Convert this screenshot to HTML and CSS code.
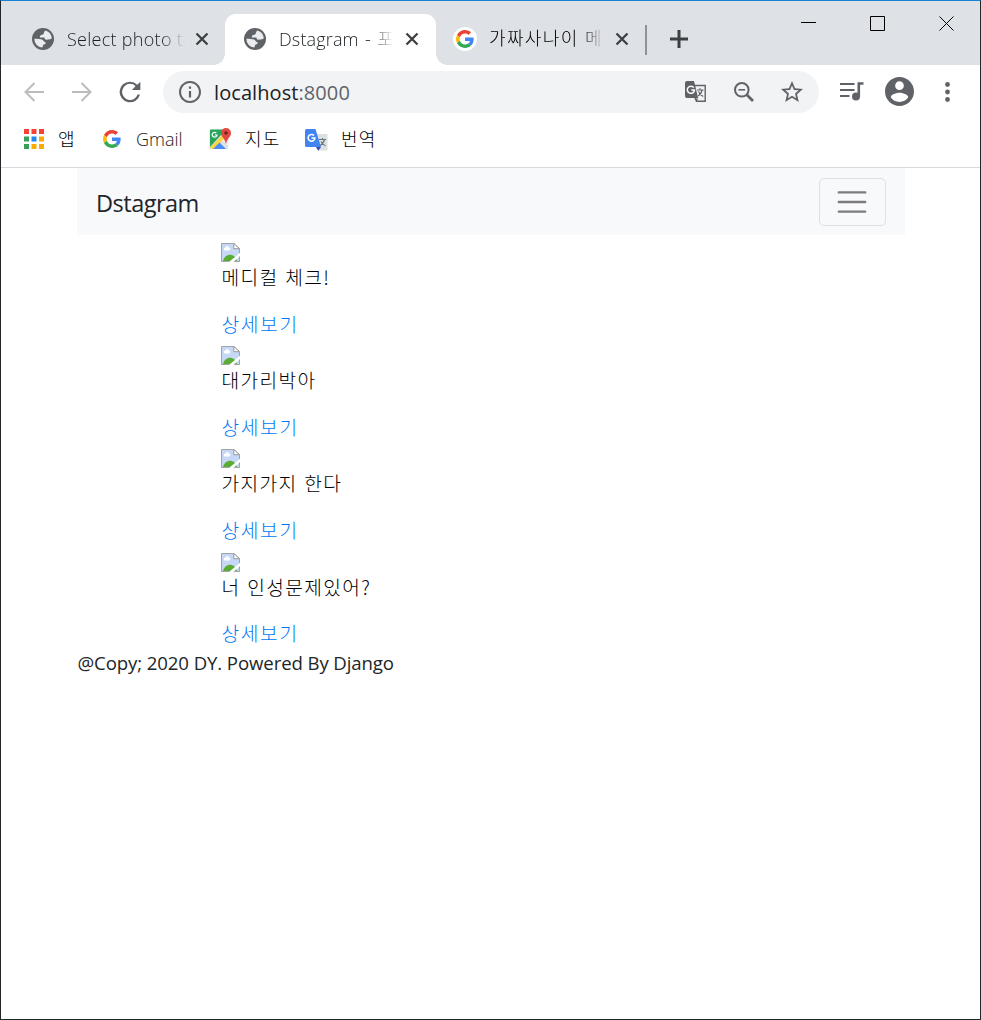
FILE: index.html
```html
<!DOCTYPE html>
<html lang="ko">
<head>
<meta charset="utf-8">
<title>Dstagram</title>
<link rel="stylesheet" href="styles.css">
</head>
<body>
<svg class="defs" width="0" height="0">
  <symbol id="globe" viewBox="0 0 22 22"><circle cx="11" cy="11" r="11" fill="#5f6368"/><path fill="#e9ebee" d="M13.500 2.600A8.800 8.800 0 0 1 19.700 10.500l-1.500.7c-1.700-.2-3.100.8-4.700.3-.9-.3-.6-1.500-1.300-2.100H7.700c.2-1.600 1-2.500 2.600-2.600 1-.1 1.300-.6 1.500-1.500.3-1.200.7-2.100 1.700-2.700z"/><path fill="#e9ebee" d="M2.300 10.800c3 0 6.200.1 8.200 1 1.100.5.800 2 2.300 2.200 1 .1 1.100 1 .5 1.700-.7.800-2 .7-2.400 1.700-.3.800 0 1.700-.8 2.200A8.800 8.800 0 0 1 2.300 10.800z"/></symbol>
  <symbol id="google" viewBox="0 0 48 48"><path fill="#EA4335" d="M24 9.500c3.540 0 6.710 1.220 9.210 3.600l6.850-6.850C35.900 2.380 30.470 0 24 0 14.620 0 6.510 5.380 2.560 13.220l7.980 6.190C12.430 13.720 17.740 9.500 24 9.500z"/><path fill="#4285F4" d="M46.980 24.550c0-1.570-.15-3.090-.38-4.550H24v9.020h12.940c-.58 2.960-2.260 5.480-4.780 7.180l7.730 6c4.510-4.180 7.090-10.360 7.090-17.650z"/><path fill="#FBBC05" d="M10.530 28.590c-.48-1.450-.76-2.990-.76-4.590s.27-3.140.76-4.590l-7.980-6.190C.92 16.460 0 20.120 0 24c0 3.880.92 7.540 2.560 10.780l7.970-6.190z"/><path fill="#34A853" d="M24 48c6.480 0 11.930-2.130 15.890-5.810l-7.730-6c-2.150 1.450-4.920 2.300-8.160 2.300-6.260 0-11.570-4.220-13.470-9.910l-7.980 6.190C6.510 42.620 14.620 48 24 48z"/></symbol>
  <symbol id="close" viewBox="0 0 14 14"><path d="M1.500 1.500l11 11m0-11l-11 11" stroke="#3c4043" stroke-width="2.300"/></symbol>
  <symbol id="broken" viewBox="0 0 19 19"><path d="M.5.5h12.300l5.700 5.200v12.800H.5z" fill="#c6d8f5" stroke="#a3a3a3"/><ellipse cx="6" cy="6" rx="3.300" ry="1.700" fill="#fff"/><circle cx="6.300" cy="4.800" r="1.700" fill="#fff"/><path d="M2 18c1-4 4-6.200 7-6.200 3.500 0 6 2.500 7 6.200z" fill="#59ad35"/><path d="M12.800.5v5.200h5.700z" fill="#fff" stroke="#999"/><path d="M8 19L19 9.800V13l-6.500 6z" fill="#fff"/></symbol>
</svg>
<div class="window">
  <header class="titlebar">
    <div class="tab tab-first"><svg class="favicon"><use href="#globe"/></svg><span class="tab-title t1">Select photo to</span><svg class="tab-close"><use href="#close"/></svg></div>
    <div class="tab tab-active"><svg class="favicon"><use href="#globe"/></svg><span class="tab-title t2">Dstagram - <span class="ko">포토</span></span><svg class="tab-close"><use href="#close"/></svg></div>
    <div class="tab tab-last"><span class="favicon favicon-disc"><svg width="18" height="18"><use href="#google"/></svg></span><span class="tab-title t3 ko">가짜사나이 메디</span><svg class="tab-close"><use href="#close"/></svg></div>
    <svg class="new-tab" width="18" height="18" viewBox="0 0 18 18"><path d="M9 0v18M0 9h18" stroke="#3c4043" stroke-width="3"/></svg>
    <div class="controls">
      <svg width="15" height="15" viewBox="0 0 15 15"><path d="M0 6.500h15" stroke="#000"/></svg>
      <svg width="15" height="15" viewBox="0 0 15 15"><path d="M.5.5h14v14H.5z" fill="none" stroke="#000"/></svg>
      <svg width="15" height="15" viewBox="0 0 15 15"><path d="M.5.5l14 14m0-14l-14 14" stroke="#000"/></svg>
    </div>
  </header>
  <div class="toolbar">
    <div class="nav-icons">
      <svg width="20" height="20" viewBox="0 0 20 20" fill="none" stroke="#babcbe" stroke-width="2"><path d="M20 10H1.500M10.500 1L1.500 10l9 9"/></svg>
      <svg width="20" height="20" viewBox="0 0 20 20" fill="none" stroke="#babcbe" stroke-width="2"><path d="M0 10h18.500M9.500 1l9 9-9 9"/></svg>
      <svg class="reload" width="22" height="22" viewBox="3.500 3.500 17 17"><path fill="#5f6368" d="M17.650 6.350A7.960 7.960 0 0 0 12 4a8 8 0 1 0 7.730 10h-1.800A6.200 6.200 0 1 1 12 5.700c1.660 0 3.140.69 4.220 1.780L13.500 10.500H20V4z"/></svg>
    </div>
    <div class="omnibox">
      <svg width="22" height="22" viewBox="2 2 20 20"><path fill="#5f6368" d="M11 7h2v2h-2zm0 4h2v6h-2zm1-9C6.480 2 2 6.480 2 12s4.480 10 10 10 10-4.480 10-10S17.520 2 12 2zm0 18.100c-4.460 0-8.100-3.640-8.100-8.100S7.540 3.900 12 3.900s8.100 3.640 8.100 8.100-3.640 8.100-8.100 8.100z"/></svg>
      <span class="url">localhost<span class="port">:8000</span></span>
      <span class="omni-actions">
        <svg width="22" height="22" viewBox="0 0 22 22"><path d="M9 4.500h11.200v15.800H11.500L10 17" fill="none" stroke="#5f6368" stroke-width="1.400"/><path d="M2 0h7l4.200 17H2a2 2 0 0 1-2-2V2a2 2 0 0 1 2-2z" fill="#5f6368"/><path d="M8.800 6.600A3.600 3.600 0 1 0 9.500 9H6.300" fill="none" stroke="#fff" stroke-width="1.500"/><path d="M12 9h6.500M15 7.300V9m2.200 0c-.6 2.700-2.200 4.800-4 6m.2-4.500c1 2 2.800 3.800 4.800 5" fill="none" stroke="#5f6368" stroke-width="1.200"/><path d="M10 17.500h3.300l-1.700 3z" fill="#5f6368"/></svg>
        <svg width="20" height="20" viewBox="0 0 20 20" fill="none" stroke="#5f6368"><circle cx="7.800" cy="7.800" r="6.800" stroke-width="2"/><path d="M4.500 7.800h6.600" stroke-width="1.600"/><path d="M12.800 12.800l6.200 6.200" stroke-width="2.700"/></svg>
        <svg width="22" height="22" viewBox="2 2 20 20"><path fill="#5f6368" d="M22 9.240l-7.190-.62L12 2 9.190 8.630 2 9.240l5.460 4.730L5.820 21 12 17.270 18.180 21l-1.630-7.030L22 9.240zM12 15.400l-3.760 2.270 1-4.280-3.320-2.880 4.380-.38L12 6.100l1.710 4.040 4.380.38-3.320 2.880 1 4.280L12 15.400z"/></svg>
      </span>
    </div>
    <div class="right-icons">
      <svg width="24" height="19" viewBox="0 0 24 19"><path d="M0 2h14.500M0 8h14.500M0 14h9.500" stroke="#5f6368" stroke-width="2.200"/><circle cx="16" cy="14.500" r="4" fill="#5f6368"/><path d="M18.800 15V1.500h4.700" fill="none" stroke="#5f6368" stroke-width="2.600"/></svg>
      <svg width="29" height="29" viewBox="2 2 20 20"><path fill="#5f6368" d="M12 2C6.480 2 2 6.480 2 12s4.480 10 10 10 10-4.480 10-10S17.520 2 12 2zm0 3c1.660 0 3 1.340 3 3s-1.340 3-3 3-3-1.340-3-3 1.340-3 3-3zm0 14.200c-2.500 0-4.710-1.280-6-3.220.03-1.990 4-3.080 6-3.080 1.990 0 5.970 1.090 6 3.080-1.290 1.940-3.500 3.220-6 3.220z"/></svg>
      <svg width="5" height="20" viewBox="0 0 5 20" fill="#5f6368"><circle cx="2.500" cy="2.500" r="2.400"/><circle cx="2.500" cy="10" r="2.400"/><circle cx="2.500" cy="17.500" r="2.400"/></svg>
    </div>
  </div>
  <nav class="bookmarks">
    <svg class="bm-icon" width="20" height="20" viewBox="0 0 20 20"><path fill="#f44336" d="M0 0h5v5H0zM7.500 0h5v5h-5zM15 0h5v5h-5z"/><path fill="#34a05a" d="M0 7.500h5v5H0zM0 15h5v5H0z"/><path fill="#1e88f5" d="M7.500 7.500h5v5h-5z"/><path fill="#fbab00" d="M15 7.500h5v5h-5zM7.500 15h5v5h-5zM15 15h5v5h-5z"/></svg>
    <span class="bm bm-apps ko">앱</span>
    <svg class="bm-icon" width="18" height="18"><use href="#google"/></svg>
    <span class="bm bm-gmail">Gmail</span>
    <svg class="bm-icon" width="22" height="22" viewBox="0 0 22 22"><path d="M1.500 1.500H19V21H.5V2.500z" fill="#dfe2e5"/><path d="M1.500 1.500H17L1 19V2z" fill="#2ba45b"/><path d="M15 6l5 5v8L12 11z" fill="#f1f1f1"/><path d="M1 19.500L13.500 7l2.500 2.500L4 21.500z" fill="#fdd43b"/><path d="M4 21l6.500-6.500L17 21z" fill="#4b8df8"/><path d="M7.300 5A2.400 2.400 0 1 0 8 7H5.800" fill="none" stroke="#fff" stroke-width="1.200"/><path d="M17 0a5 5 0 0 1 5 5c0 4.200-4 5.200-4.800 10.500h-.5C16 10.200 12 9.200 12 5a5 5 0 0 1 5-5z" fill="#e24a40"/><circle cx="17" cy="5" r="1.800" fill="#6f2521"/></svg>
    <span class="bm bm-maps ko">지도</span>
    <svg class="bm-icon bm-tr" width="23" height="22" viewBox="0 0 23 22"><path d="M8 5h14.500v16.500H13z" fill="#dedfe1"/><path d="M1.500 0h9l5.500 18H1.500A1.500 1.500 0 0 1 0 16.500v-15A1.500 1.500 0 0 1 1.500 0z" fill="#4384f3"/><path d="M11 18h5l-2.800 3.800z" fill="#314bad"/><path d="M9 6.500A3.400 3.400 0 1 0 9.900 9H6.500" fill="none" stroke="#fff" stroke-width="1.500"/><path d="M14 10.500h7M17.500 9v1.500m2 0c-.6 2.500-2.500 5-4.500 6m1-4c1 2 3 3.500 4.500 4.200" fill="none" stroke="#607983" stroke-width="1.100"/></svg>
    <span class="bm bm-translate ko">번역</span>
  </nav>
  <main class="container">
    <div class="navbar">
      <a class="brand">Dstagram</a>
      <button class="toggler" aria-label="menu"><svg width="36" height="36" viewBox="0 0 30 30"><path stroke="rgba(0,0,0,.5)" stroke-width="2" stroke-linecap="round" d="M4 7h22M4 15h22M4 23h22"/></svg></button>
    </div>
    <section class="photos">
      <article class="photo"><svg class="broken"><use href="#broken"/></svg><p class="caption">메디컬 체크!</p><a class="detail">상세보기</a></article>
      <article class="photo"><svg class="broken"><use href="#broken"/></svg><p class="caption">대가리박아</p><a class="detail">상세보기</a></article>
      <article class="photo"><svg class="broken"><use href="#broken"/></svg><p class="caption">가지가지 한다</p><a class="detail">상세보기</a></article>
      <article class="photo"><svg class="broken"><use href="#broken"/></svg><p class="caption">너 인성문제있어?</p><a class="detail">상세보기</a></article>
    </section>
    <footer><span class="foot">@Copy; 2020 DY. Powered By Django</span></footer>
  </main>
</div>
</body>
</html>
```
FILE: styles.css
```css
* { box-sizing: border-box; }
body { margin: 0; font-family: "Open Sans", "Noto Sans CJK KR", sans-serif; background: #fff; }
svg { display: block; flex: none; }
.defs { position: absolute; }
.ko, .caption, .detail { font-family: "Noto Sans CJK KR", sans-serif; font-weight: 300; }
.window { width: 981px; height: 1020px; border: 1px solid #23272c; border-top-color: #1a80d2; background: #fff; overflow: hidden; }

.titlebar { display: flex; height: 64px; padding-left: 14px; background: #dee1e6; }
.tab { display: flex; align-items: center; width: 210px; height: 51px; margin-top: 13px; padding: 0 0 1px 17px; position: relative; }
.tab-active { width: 211px; padding-left: 19px; background: #fff; border-radius: 11px 11px 0 0; }
.tab-active::before, .tab-active::after { content: ""; position: absolute; bottom: 0; width: 11px; height: 11px; }
.tab-active::before { left: -11px; background: radial-gradient(circle at 0 0, #dee1e6 10.500px, #fff 11px); }
.tab-active::after { right: -11px; background: radial-gradient(circle at 100% 0, #dee1e6 10.500px, #fff 11px); }
.tab-last { width: 211px; padding-left: 18px; }
.tab-last::after { content: ""; position: absolute; right: 0; top: 11px; width: 2px; height: 30px; background: #8f9296; }
.favicon { width: 22px; height: 22px; flex: none; }
.favicon-disc { display: flex; align-items: center; justify-content: center; width: 24px; height: 24px; margin: 0 -1px; border-radius: 50%; background: #fff; }
.tab-title { width: 115px; margin: 0 11px 0 13px; padding-bottom: 1px; overflow: hidden; white-space: nowrap; font-size: 18px; font-weight: 300; line-height: 30px; color: #1c2023; -webkit-mask-image: linear-gradient(90deg, #000 80%, transparent); mask-image: linear-gradient(90deg, #000 80%, transparent); }
.t1 { width: 118px; margin-right: 10px; letter-spacing: .28px; }
.t2 { letter-spacing: .15px; word-spacing: 1.500px; }
.t3 { letter-spacing: 1.350px; padding-bottom: 4px; color: #000; }
.tab-close { width: 14px; height: 14px; }
.new-tab { margin: 29px 0 0 23px; }
.controls { display: flex; gap: 54px; margin: 15px 0 0 113px; }

.toolbar { display: flex; align-items: center; height: 53px; margin-bottom: 1px; }
.nav-icons { display: flex; align-items: center; gap: 28px; width: 162px; padding-left: 23px; }
.reload { margin-left: -1px; }
.omnibox { display: flex; align-items: center; width: 656px; height: 42px; padding: 0 16px 0 16px; border-radius: 21px; background: #f1f3f4; }
.url { margin-left: 13px; padding-top: 2px; font-size: 20px; line-height: 30px; letter-spacing: .08px; color: #202124; }
.port { color: #5f6368; }
.omni-actions { display: flex; align-items: center; gap: 27px; margin-left: auto; }
.right-icons { display: flex; align-items: center; gap: 21px; margin-left: 21px; }
.right-icons svg:last-child { margin-left: 10px; }

.bookmarks { display: flex; align-items: center; height: 49px; padding: 0 0 8px 23px; border-bottom: 1px solid #d7dadd; font-size: 18px; line-height: 28px; color: #1c2023; }
.bm { white-space: nowrap; font-weight: 300; }
.bm.ko { letter-spacing: 1.200px; padding-bottom: 3px; color: #000; }
.bm-apps { width: 17px; margin: 0 28px 0 14px; }
.bm-gmail { width: 47px; margin: 0 26px 0 15px; }
.bm-maps { width: 35px; margin: 0 25px 0 14px; }
.bm-translate { margin-left: 13px; }
.bm-tr { margin-top: 1px; }

.container { width: 828px; margin-left: 76px; font-size: 19.200px; line-height: 28.800px; color: #212529; }
.navbar { display: flex; align-items: center; justify-content: space-between; height: 67px; padding: 0 19px; background: #f8f9fb; }
.brand { font-size: 23.500px; line-height: 36px; letter-spacing: -.5px; color: #212529; padding-top: 3px; }
.toggler { display: flex; align-items: center; justify-content: center; width: 67px; height: 48px; padding: 0 2px 0 0; border: 1px solid #dfe0e2; border-radius: 5px; background: none; }
.photos { padding: 8px 0 0 144px; }
.photo { display: flex; flex-direction: column; align-items: flex-start; height: 103.200px; }
.photo:last-child { height: 96.500px; }
.broken { width: 19px; height: 19px; }
.caption { margin: 1px 0 18px; padding-left: .5px; letter-spacing: 1.350px; color: #000; }
.detail { padding-left: .5px; color: #0078f5; letter-spacing: 1.650px; }
.foot { padding-left: .5px; letter-spacing: -.1px; font-size: 18.600px; }
```
